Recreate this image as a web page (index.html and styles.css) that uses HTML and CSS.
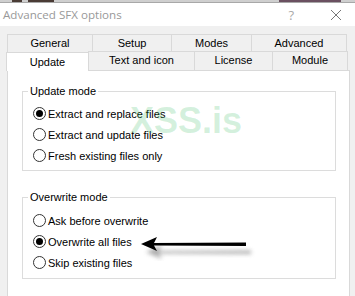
FILE: index.html
```html
<!DOCTYPE html>
<html lang="en">
<head>
  <meta charset="UTF-8">
  <title>Advanced SFX options</title>
  <link rel="stylesheet" href="styles.css">
</head>
<body>
  <div class="behind">
    <span class="frag frag-a"></span>
    <span class="frag frag-b"></span>
    <span class="frag frag-c"></span>
  </div>
  <div class="window">
    <div class="titlebar">
      <span class="title">Advanced SFX options</span>
      <span class="help">?</span>
      <svg class="close" width="12" height="12" viewBox="0 0 12 12">
        <path d="M1 1 L11 11 M11 1 L1 11" stroke="#777" stroke-width="1" fill="none"/>
      </svg>
    </div>
    <div class="client">
      <div class="tabrow back">
        <div class="tab w-general">General</div>
        <div class="tab w-setup">Setup</div>
        <div class="tab w-modes">Modes</div>
        <div class="tab w-advanced">Advanced</div>
      </div>
      <div class="tabrow front">
        <div class="tab w-update active">Update</div>
        <div class="tab w-text">Text and icon</div>
        <div class="tab w-license">License</div>
        <div class="tab w-module">Module</div>
      </div>
      <div class="page">
        <div class="watermark">XSS.is</div>
        <fieldset class="group first">
          <legend>Update mode</legend>
          <div class="option"><span class="radio checked"></span>Extract and replace files</div>
          <div class="option"><span class="radio"></span>Extract and update files</div>
          <div class="option"><span class="radio"></span>Fresh existing files only</div>
        </fieldset>
        <fieldset class="group second">
          <legend>Overwrite mode</legend>
          <div class="option"><span class="radio"></span>Ask before overwrite</div>
          <div class="option"><span class="radio checked"></span>Overwrite all files</div>
          <div class="option"><span class="radio"></span>Skip existing files</div>
        </fieldset>
        <svg class="arrow" width="120" height="26" viewBox="0 0 120 26">
          <defs>
            <filter id="shade" x="-20%" y="-50%" width="140%" height="250%">
              <feGaussianBlur stdDeviation="2"/>
            </filter>
          </defs>
          <path d="M4 13 L20 6 L17 12 L109 11.5 L109 15 L17 14.5 L20 20 Z" fill="#777" opacity="0.6" filter="url(#shade)" transform="translate(3 4)"/>
          <path d="M2 9 L18 2 L15 8 L107 7.5 L107 11 L15 10.5 L18 16 Z" fill="#000"/>
        </svg>
      </div>
    </div>
  </div>
</body>
</html>
```

FILE: styles.css
```css
/* dialog look */
html, body {
  margin: 0;
  padding: 0;
}
body {
  width: 355px;
  height: 296px;
  overflow: hidden;
  background: #f0f0f0;
  font-family: "Liberation Sans", Arial, sans-serif;
  font-size: 11px;
  color: #000;
}
.behind {
  height: 2px;
  background: #cfcfcf;
  display: flex;
}
.frag {
  height: 2px;
  background: #4a3b35;
}
.frag-a {
  margin-left: 12px;
  width: 10px;
}
.frag-b {
  margin-left: 6px;
  width: 26px;
}
.frag-c {
  margin-left: 225px;
  width: 62px;
  background: #6a5060;
}
.window {
  border-top: 1px solid #a8a8a8;
}
.titlebar {
  height: 23px;
  background: #fff;
  display: flex;
  align-items: center;
  padding-left: 3px;
}
.title {
  font-family: "Open Sans", sans-serif;
  font-size: 11.6px;
  color: #999;
  flex: 1;
}
.help {
  font-family: "Open Sans", sans-serif;
  font-size: 13px;
  color: #aaa;
  margin-right: 36px;
}
.close {
  margin-right: 13px;
}
.client {
  padding: 8px 0 0 7px;
  position: relative;
}
.tabrow {
  display: flex;
}
.tabrow.back {
  margin-left: 1px;
}
.tab {
  height: 17px;
  line-height: 17px;
  text-align: center;
  border: 1px solid #d9d9d9;
  border-bottom: none;
  margin-left: -1px;
  background: #f0f0f0;
}
.tabrow.front {
  margin-top: -1px;
  align-items: flex-end;
}
.tabrow.front .tab {
  height: 18px;
}
.tab.active {
  background: #fff;
  height: 21px;
  line-height: 19px;
  margin-left: -1px;
  position: relative;
  z-index: 2;
  margin-bottom: -1px;
}
.w-general { width: 84px; }
.w-setup { width: 78px; }
.w-modes { width: 79px; }
.w-advanced { width: 94px; }
.w-update { width: 81px; }
.w-text { width: 105px; }
.w-license { width: 77px; }
.w-module { width: 74px; }
.page {
  position: relative;
  width: 341px;
  height: 226px;
  background: #fff;
  border: 1px solid #d9d9d9;
}
.group {
  margin: 0 0 0 14px;
  padding: 0 0 4px 0;
  width: 312px;
  border: 1px solid #dcdcdc;
  min-width: 0;
}
.group.first {
  margin-top: 14px;
}
.group.second {
  margin-top: 20px;
  padding-bottom: 5px;
}
.group legend {
  margin-left: 5px;
  padding: 0 2px;
  line-height: 13px;
}
.group.first legend {
  margin-bottom: 5px;
}
.group.second legend {
  margin-bottom: 6px;
}
.option {
  height: 21px;
  display: flex;
  align-items: center;
  padding-left: 10px;
}
.radio {
  width: 11px;
  height: 11px;
  border: 1px solid #333;
  border-radius: 50%;
  margin-right: 2px;
  position: relative;
  background: #fff;
}
.radio.checked::after {
  content: "";
  position: absolute;
  left: 2px;
  top: 2px;
  width: 7px;
  height: 7px;
  border-radius: 50%;
  background: #000;
}
.watermark {
  position: absolute;
  left: 122px;
  top: 29px;
  font-family: "Liberation Sans", Arial, sans-serif;
  font-weight: bold;
  font-size: 36px;
  color: rgba(60, 190, 100, 0.22);
  pointer-events: none;
}
.arrow {
  position: absolute;
  left: 131px;
  top: 164px;
}
```
